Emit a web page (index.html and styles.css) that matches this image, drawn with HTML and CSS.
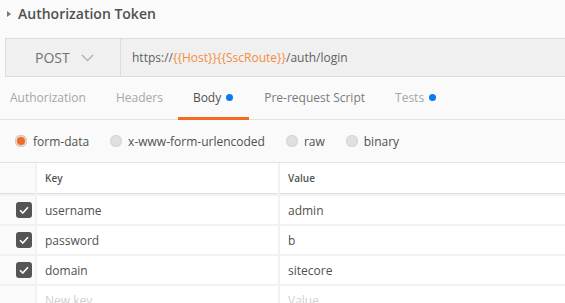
FILE: index.html
```html
<!DOCTYPE html>
<html lang="en">
<head>
    <meta charset="UTF-8">
    <title>Authorization Token</title>
    <link rel="stylesheet" href="styles.css">
</head>
<body>
    <div class="title"><span class="caret"></span>Authorization Token</div>

    <div class="urlbar">
        <div class="method">POST
            <svg class="chev" width="13" height="8" viewBox="0 0 13 8"><path d="M1 1 L6.5 6.5 L12 1" fill="none" stroke="#b0b0b0" stroke-width="1.3"/></svg>
        </div>
        <div class="url">https://<span class="var">{{Host}}</span><span class="var">{{SscRoute}}</span>/auth/login</div>
    </div>

    <div class="tabs">
        <div class="tab">Authorization</div>
        <div class="tab">Headers</div>
        <div class="tab active">Body <span class="dot"></span></div>
        <div class="tab hover">Pre-request Script</div>
        <div class="tab">Tests <span class="dot"></span></div>
    </div>

    <div class="modes">
        <label class="mode"><span class="radio on"></span>form-data</label>
        <label class="mode"><span class="radio"></span>x-www-form-urlencoded</label>
        <label class="mode"><span class="radio"></span>raw</label>
        <label class="mode"><span class="radio"></span>binary</label>
    </div>

    <div class="params">
        <div class="cell head"></div>
        <div class="cell head key">Key</div>
        <div class="cell head key">Value</div>

        <div class="cell check"><span class="box"><svg width="10" height="8" viewBox="0 0 10 8"><path d="M1 4.2 L3.8 7 L9 1.2" fill="none" stroke="#fff" stroke-width="1.6"/></svg></span></div>
        <div class="cell">username</div>
        <div class="cell">admin</div>

        <div class="cell check"><span class="box"><svg width="10" height="8" viewBox="0 0 10 8"><path d="M1 4.2 L3.8 7 L9 1.2" fill="none" stroke="#fff" stroke-width="1.6"/></svg></span></div>
        <div class="cell">password</div>
        <div class="cell">b</div>

        <div class="cell check"><span class="box"><svg width="10" height="8" viewBox="0 0 10 8"><path d="M1 4.2 L3.8 7 L9 1.2" fill="none" stroke="#fff" stroke-width="1.6"/></svg></span></div>
        <div class="cell">domain</div>
        <div class="cell">sitecore</div>

        <div class="cell check"></div>
        <div class="cell empty">New key</div>
        <div class="cell empty">Value</div>
    </div>
</body>
</html>
```

FILE: styles.css
```css
body {
    margin: 0;
    background: #fafafa;
    font-family: "Open Sans", Arial, sans-serif;
    color: #505050;
    overflow: hidden;
}
.title {
    display: flex;
    align-items: center;
    height: 27px;
    padding-left: 7px;
    font-size: 14px;
    font-weight: 600;
    color: #505050;
}
.caret {
    width: 0;
    height: 0;
    border-top: 3.5px solid transparent;
    border-bottom: 3.5px solid transparent;
    border-left: 4px solid #777;
    margin-right: 7px;
}
.urlbar {
    display: flex;
    margin: 11px 0 0 5px;
    height: 37px;
    border: 1px solid #dcdcdc;
    border-right: none;
    background: #f0f0f0;
}
.method {
    display: flex;
    align-items: center;
    width: 115px;
    padding-left: 29px;
    box-sizing: border-box;
    border-right: 1px solid #dcdcdc;
    font-size: 14px;
    color: #707070;
}
.chev {
    margin-left: 11px;
}
.url {
    display: flex;
    align-items: center;
    padding-left: 11px;
    font-size: 12px;
    color: #606060;
}
.var {
    color: #f68c3e;
}
.tabs {
    display: flex;
    height: 42px;
    margin-left: -5px;
    border-bottom: 1px solid #e2e2e2;
}
.tab {
    display: flex;
    align-items: center;
    padding: 0 15px;
    font-size: 12px;
    color: #a6a6a6;
    border-bottom: 3px solid transparent;
    margin-bottom: -1px;
}
.tab.hover {
    color: #7a7a7a;
}
.tab.active {
    color: #505050;
    border-bottom-color: #f26b21;
    padding-right: 16px;
}
.dot {
    display: inline-block;
    width: 7px;
    height: 7px;
    margin-left: 5px;
    border-radius: 50%;
    background: #097bed;
}
.modes {
    display: flex;
    align-items: center;
    height: 42px;
    padding-left: 15px;
    border-bottom: 1px solid #e2e2e2;
    font-size: 12px;
    color: #505050;
}
.mode {
    display: flex;
    align-items: center;
    margin-right: 21px;
}
.radio {
    width: 12px;
    height: 12px;
    margin-right: 6px;
    border-radius: 50%;
    background: #e0e0e0;
    box-shadow: inset 0 0 0 1px #d4d4d4;
}
.radio.on {
    background: #f26b21;
    box-shadow: inset 0 0 0 2px #d8d8d8;
}
.params {
    display: grid;
    grid-template-columns: 35px 241px 1fr;
    grid-template-rows: 31px;
    grid-auto-rows: 28px;
    gap: 2px;
    background: #f2f2f2;
    font-size: 12px;
}
.cell {
    display: flex;
    align-items: center;
    padding-left: 8px;
    background: #fff;
    color: #505050;
}
.cell.head {
    border-bottom: 1px solid #e0e0e0;
    font-size: 10px;
    font-weight: 600;
    color: #555;
}
.cell.check {
    justify-content: flex-end;
    padding: 0 3px 0 0;
    background: #fafafa;
}
.cell.head:first-child {
    background: #fafafa;
}
.box {
    display: flex;
    align-items: center;
    justify-content: center;
    width: 16px;
    height: 16px;
    border-radius: 3px;
    background: #555;
}
.cell.empty {
    color: #d0d0d0;
}
```
